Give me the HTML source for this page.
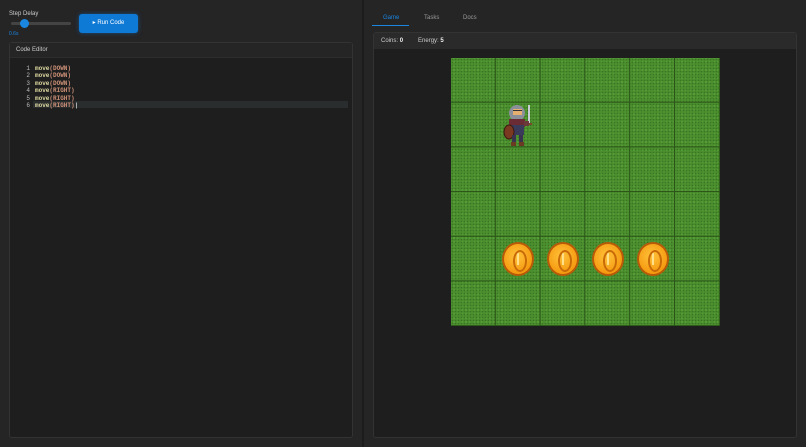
<!DOCTYPE html>
<html><head><meta charset="utf-8"><style>
*{box-sizing:border-box;margin:0;padding:0}
body{width:806px;height:447px;background:#252526;font-family:"Liberation Sans",sans-serif;color:#ccc;position:relative;overflow:hidden}
.abs{position:absolute}
.code{font-family:"Liberation Mono",monospace;font-size:6px;font-weight:bold}
.ln{position:absolute;left:22px;width:8px;text-align:right;color:#bbb;font-weight:normal}
.cl{position:absolute;left:35px}
.kw{color:#dcd8a0}.ar{color:#ce9178}
.grid{position:absolute;left:451px;top:58px;width:269px;height:268px;background-color:#4b8f2e;
background-image:linear-gradient(#2a5418 1px,transparent 1px),linear-gradient(90deg,#2a5418 1px,transparent 1px),radial-gradient(#3a7522 0.7px,transparent 0.9px),radial-gradient(#5ea83c 0.7px,transparent 0.9px);
background-size:44.8px 44.7px,44.8px 44.7px,3px 3px,4px 4px;background-position:-1px -1px,-1px -1px,0 0,1px 2px}
.coin{position:absolute;width:32px;height:34px;border-radius:50%;background:radial-gradient(circle at 45% 40%,#ffc23a,#f59a10 70%);border:2px solid #b85a08}
.coin:after{content:"";position:absolute;left:9px;top:6px;width:10px;height:18px;border-radius:50%;border:2px solid #c96a08}
.coin:before{content:"";position:absolute;left:13px;top:9px;width:2px;height:12px;background:#ffe08a}
</style></head><body>
<div class="abs" style="left:9px;top:11px;font-size:6px;color:#ccc">Step Delay</div>
<div class="abs" style="left:11px;top:22px;width:60px;height:3px;background:#444;border-radius:2px"></div>
<div class="abs" style="left:20px;top:19px;width:9px;height:9px;border-radius:50%;background:#1a86e0"></div>
<div class="abs" style="left:9px;top:31px;font-size:5px;color:#1a86e0">0.6s</div>
<div class="abs" style="left:79px;top:14px;width:59px;height:19px;background:#0e7ad6;border-radius:3px;box-shadow:0 0 4px rgba(14,122,214,.5);color:#fff;font-size:6px;text-align:center;line-height:19px">▸ Run Code</div>

<div class="abs" style="left:9px;top:42px;width:344px;height:396px;background:#1e1e1e;border:1px solid #333;border-radius:3px">
 <div style="height:15px;background:#252526;border-bottom:1px solid #2d2d2d;font-size:6px;line-height:15px;padding-left:6px;color:#ccc">Code Editor</div>
</div>
<div class="abs" style="left:33px;top:101px;width:315px;height:7px;background:#2a2d2e"></div>
<div class="code">
<div class="ln" style="top:64.5px">1</div><div class="cl" style="top:64.5px"><span class="kw">move</span><span class="ar">(DOWN)</span></div>
<div class="ln" style="top:72px">2</div><div class="cl" style="top:72px"><span class="kw">move</span><span class="ar">(DOWN)</span></div>
<div class="ln" style="top:79.6px">3</div><div class="cl" style="top:79.6px"><span class="kw">move</span><span class="ar">(DOWN)</span></div>
<div class="ln" style="top:87.2px">4</div><div class="cl" style="top:87.2px"><span class="kw">move</span><span class="ar">(RIGHT)</span></div>
<div class="ln" style="top:94.8px">5</div><div class="cl" style="top:94.8px"><span class="kw">move</span><span class="ar">(RIGHT)</span></div>
<div class="ln" style="top:102.4px">6</div><div class="cl" style="top:102.4px"><span class="kw">move</span><span class="ar">(RIGHT)</span>|</div>
</div>

<div class="abs" style="left:362px;top:0;width:2px;height:447px;background:#1c1c1c"></div>

<div class="abs" style="left:383px;top:15px;font-size:6px;color:#1a86e0">Game</div>
<div class="abs" style="left:372px;top:25px;width:37px;height:1px;background:#1a86e0"></div>
<div class="abs" style="left:424px;top:15px;font-size:6px;color:#999">Tasks</div>
<div class="abs" style="left:463px;top:15px;font-size:6px;color:#999">Docs</div>

<div class="abs" style="left:373px;top:32px;width:424px;height:406px;background:#1e1e1e;border:1px solid #333;border-radius:3px">
 <div style="height:16px;background:#2a2a2b;font-size:6px;line-height:16px;padding-left:7px;color:#ccc">Coins: <b style="color:#eee">0</b>&nbsp;&nbsp;&nbsp;&nbsp;&nbsp;&nbsp;&nbsp;&nbsp;&nbsp;Energy: <b style="color:#eee">5</b></div>
</div>

<div class="grid"></div>

<svg class="abs" style="left:500px;top:103px" width="36" height="44" viewBox="0 0 36 44">
 <rect x="28" y="2" width="2" height="20" fill="#c8ccd4"/>
 <rect x="26" y="20" width="6" height="2" fill="#7a4a2a"/>
 <ellipse cx="17" cy="10" rx="8" ry="8" fill="#8a8f99"/>
 <rect x="13" y="6" width="9" height="6" fill="#e8b070"/>
 <rect x="13" y="7" width="9" height="1" fill="#333"/>
 <rect x="9" y="16" width="16" height="8" fill="#6b2b35"/>
 <rect x="24" y="18" width="5" height="5" fill="#6a3a3a"/>
 <rect x="11" y="22" width="13" height="10" fill="#3a3a5a"/>
 <ellipse cx="9" cy="29" rx="5" ry="7" fill="#7a3a22" stroke="#3a1a10" stroke-width="1"/>
 <rect x="12" y="32" width="4" height="8" fill="#3a3350"/>
 <rect x="19" y="32" width="4" height="8" fill="#3a3350"/>
 <rect x="11" y="39" width="5" height="4" fill="#6a3a22"/>
 <rect x="19" y="39" width="5" height="4" fill="#6a3a22"/>
</svg>

<div class="coin" style="left:502px;top:242px"></div>
<div class="coin" style="left:547px;top:242px"></div>
<div class="coin" style="left:592px;top:242px"></div>
<div class="coin" style="left:637px;top:242px"></div>
</body></html>
